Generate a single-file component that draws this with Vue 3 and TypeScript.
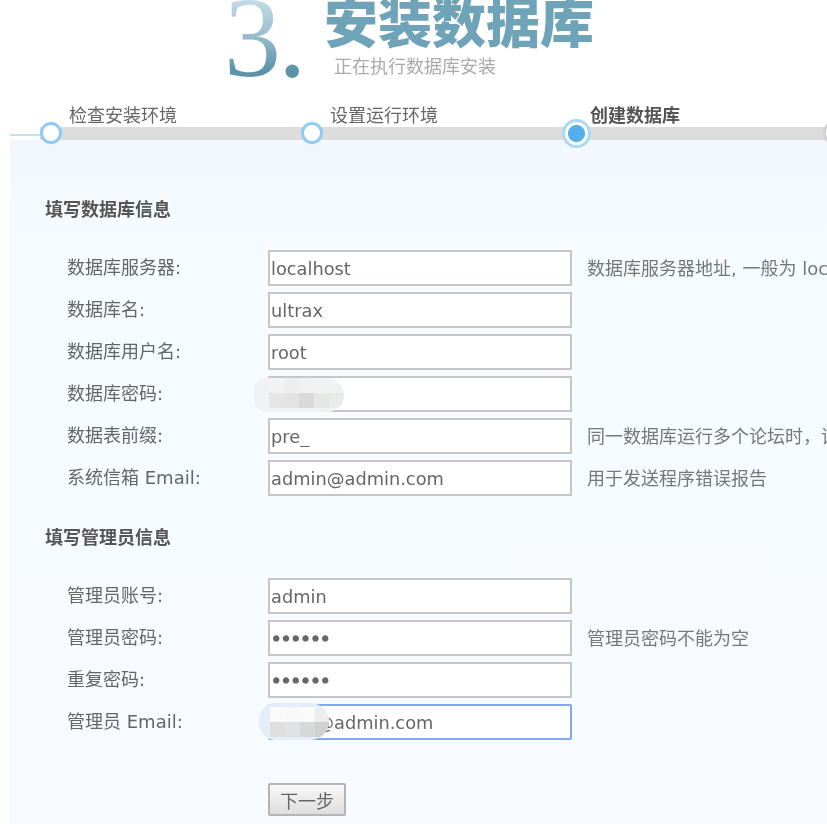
<script setup lang="ts">
interface Field {
  label: string
  value: string
  type?: string
  hint?: string
  focus?: boolean
  blur?: 'db' | 'mail'
}
const steps = [
  { label: '检查安装环境', state: 'done' },
  { label: '设置运行环境', state: 'done' },
  { label: '创建数据库', state: 'current' },
  { label: '安装', state: 'todo' },
]
const dbFields: Field[] = [
  { label: '数据库服务器:', value: 'localhost', hint: '数据库服务器地址, 一般为 localhost' },
  { label: '数据库名:', value: 'ultrax' },
  { label: '数据库用户名:', value: 'root' },
  { label: '数据库密码:', value: '', blur: 'db' },
  { label: '数据表前缀:', value: 'pre_', hint: '同一数据库运行多个论坛时，请修改前缀' },
  { label: '系统信箱 Email:', value: 'admin@admin.com', hint: '用于发送程序错误报告' },
]
const adminFields: Field[] = [
  { label: '管理员账号:', value: 'admin' },
  { label: '管理员密码:', value: '123456', type: 'password', hint: '管理员密码不能为空' },
  { label: '重复密码:', value: '123456', type: 'password' },
  { label: '管理员 Email:', value: '        @admin.com', focus: true, blur: 'mail' },
]
const sections = [
  { title: '填写数据库信息', fields: dbFields },
  { title: '填写管理员信息', fields: adminFields },
]
const dbCells = ['#f2f2f2', '#eeeeee', '#f0f1f0', '#f1f2f1', '#e5e5e5', '#e3e3e3', '#d9d9d9', '#e6e7e5', '#e9ebe9']
const mailCells = ['#fafafa', '#f8f8f8', '#fafafa', '#ececec', '#dfdedc', '#e0e1e3', '#d7d8d8', '#d0d1cf']
</script>

<template>
  <div class="page">
    <header class="head">
      <div class="num">3<span class="dot">.</span></div>
      <div class="titles">
        <h1 class="title">安装数据库</h1>
        <p class="sub">正在执行数据库安装</p>
      </div>
    </header>

    <ol class="steps">
      <li v-for="s in steps" :key="s.label" class="step" :class="s.state">
        <span class="step-label">{{ s.label }}</span>
        <span class="node"></span>
      </li>
    </ol>

    <main class="panel">
      <section v-for="sec in sections" :key="sec.title" class="sec">
        <h2 class="sec-title">{{ sec.title }}</h2>
        <div class="rows">
          <div v-for="f in sec.fields" :key="f.label" class="row">
            <label class="lbl">{{ f.label }}</label>
            <div class="field">
              <input class="inp" :class="{ focus: f.focus, pw: f.type === 'password' }" :type="f.type || 'text'" :value="f.value" />
              <div v-if="f.blur === 'db'" class="mosaic db">
                <i v-for="(c, i) in dbCells" :key="i" :style="{ background: c }"></i>
              </div>
              <div v-if="f.blur === 'mail'" class="mosaic mail">
                <i v-for="(c, i) in mailCells" :key="i" :style="{ background: c }"></i>
              </div>
            </div>
            <span v-if="f.hint" class="hint">{{ f.hint }}</span>
          </div>
        </div>
      </section>
      <div class="actions">
        <button class="btn" type="button">下一步</button>
      </div>
    </main>
  </div>
</template>

<style>
html, body { margin: 0; background: #fff; overflow: hidden; }
</style>

<style scoped>
.page {
  width: 827px;
  height: 824px;
  overflow: hidden;
  font-family: "DejaVu Sans", "Noto Sans CJK SC", sans-serif;
  font-size: 18px;
  color: #666;
  background: #fff;
  filter: blur(0.4px);
}
.head {
  display: flex;
  height: 92px;
  padding-left: 224px;
}
.num {
  font-family: "Liberation Serif", serif;
  font-size: 114px;
  line-height: 92px;
  height: 92px;
  margin-top: -8px;
  width: 100px;
  white-space: nowrap;
  background: linear-gradient(180deg, #c3d9e3 10%, #9cc0d0 45%, #5b93a9 85%);
  -webkit-background-clip: text;
  background-clip: text;
  color: transparent;
}
.dot { margin-left: -3px; }
.titles { display: flex; flex-direction: column; }
.title {
  margin: -7px 0 0;
  font-family: "Noto Sans CJK SC", sans-serif;
  font-size: 54px;
  line-height: 54px;
  font-weight: 900;
  color: #6fa3b7;
}
.sub {
  margin: 6px 0 0 10px;
  font-family: "Noto Sans CJK SC", sans-serif;
  font-size: 18px;
  line-height: 24px;
  color: #aaa;
  white-space: nowrap;
}
.steps {
  list-style: none;
  display: flex;
  margin: 0;
  padding: 0 0 0 40px;
  height: 48px;
  box-sizing: border-box;
  position: relative;
}
.steps::before {
  content: "";
  position: absolute;
  left: 10px;
  width: 32px;
  bottom: 4px;
  height: 2px;
  background: #c2e0ee;
}
.step {
  position: relative;
  flex: 0 0 261px;
  height: 48px;
  box-sizing: border-box;
  border-bottom: 13px solid #dcdcdc;
}
.step-label {
  position: absolute;
  left: 29px;
  top: 11px;
  line-height: 26px;
  white-space: nowrap;
  color: #666;
}
.current .step-label { font-weight: 700; left: 28px; color: #555; }
.node {
  position: absolute;
  left: 0;
  bottom: -17px;
  width: 22px;
  height: 22px;
  box-sizing: border-box;
  border: 3px solid #8fcbf0;
  border-radius: 50%;
  background: #fff;
}
.current .node {
  left: 0;
  bottom: -21px;
  width: 29px;
  height: 29px;
  border: 3px solid #a9d9f5;
  background: radial-gradient(circle, #54afec 0 8px, #fff 9px);
}
.todo .node { border-color: #d2d2d2; width: 26px; height: 26px; bottom: -19px; }
.todo .step-label { display: none; }
.panel {
  margin-left: 10px;
  height: 684px;
  padding: 57px 0 0 35px;
  box-sizing: border-box;
  background: linear-gradient(180deg, #f1f7fc 0, #f6fbff 100px, #f7fbff 100%);
}
.sec + .sec { margin-top: 29px; }
.sec-title {
  margin: 0;
  font-size: 18px;
  line-height: 26px;
  font-weight: 700;
  color: #555;
}
.rows {
  margin-top: 27px;
  display: flex;
  flex-direction: column;
  gap: 6px;
}
.row {
  display: flex;
  align-items: center;
  height: 36px;
  padding-left: 22px;
  white-space: nowrap;
}
.lbl {
  width: 201px;
  margin-top: -4px;
  flex: none;
}
.field { position: relative; flex: none; }
.inp {
  display: block;
  width: 304px;
  height: 36px;
  box-sizing: border-box;
  border: 2px solid #c6c6c6;
  border-radius: 0;
  padding: 0 1px;
  background: #fff;
  color: #666;
  font: 17.8px "DejaVu Sans", sans-serif;
  outline: none;
}
.inp.pw {
  letter-spacing: -0.7px;
  -webkit-text-stroke: 1.2px #666;
}
.inp.focus {
  border-color: #7fa9ec;
  border-radius: 2px;
}
.hint { margin-left: 15px; margin-top: -2px; color: #777; }
.mosaic {
  position: absolute;
  display: grid;
  overflow: hidden;
}
.mosaic i { display: block; }
.db {
  left: -14px;
  top: 2px;
  width: 90px;
  height: 34px;
  border-radius: 17px 22px 22px 17px;
  background: #eff1f2;
  grid-template-columns: repeat(5, 15px);
  grid-template-rows: 15px 15px;
  padding-left: 15px;
  box-sizing: border-box;
}
.db i:nth-child(5) { grid-column: 1; }
.mail {
  left: -9px;
  top: -1px;
  width: 70px;
  height: 37px;
  border-radius: 18px 20px 20px 18px;
  background: #e4edfa;
  grid-template-columns: repeat(4, 15px);
  grid-template-rows: 15px 15px;
  padding: 4px 0 0 11px;
  box-sizing: border-box;
}
.actions { margin: 43px 0 0 223px; }
.btn {
  display: block;
  width: 78px;
  height: 33px;
  padding: 0;
  border: 2px solid #b4b4b4;
  border-radius: 2px;
  background: linear-gradient(180deg, #f8f8f8, #dedede);
  color: #666;
  font: 18px "Noto Sans CJK SC", sans-serif;
}
</style>
